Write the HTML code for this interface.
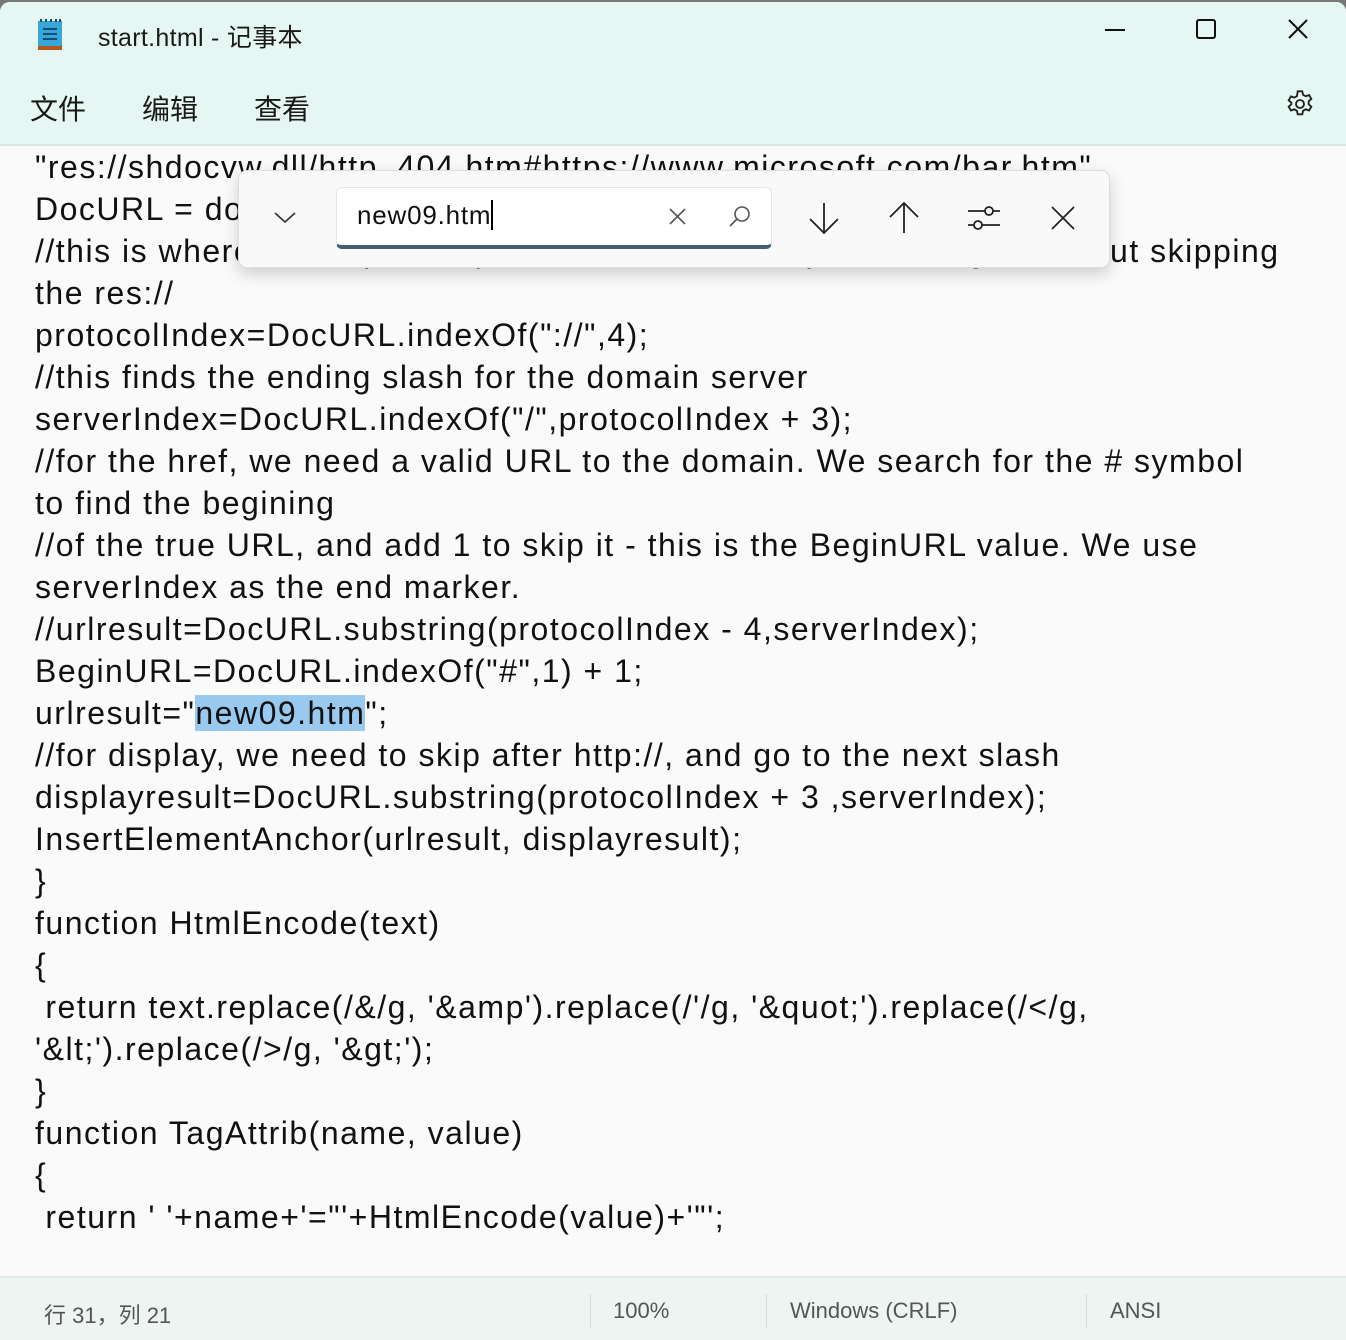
<!DOCTYPE html>
<html><head><meta charset="utf-8"><style>
body{margin:0;width:1346px;height:1340px;overflow:hidden;background:#777;font-family:"Liberation Sans","Noto Sans CJK SC",sans-serif;}
.win{position:absolute;left:0;top:2px;width:1346px;height:1338px;background:#fafafa;border-radius:10px 10px 0 0;overflow:hidden;}
.top{position:absolute;left:0;top:0;width:1346px;height:142px;background:#e6f7f3;border-bottom:2px solid #dbe6e3;}
.title{position:absolute;left:98px;top:16px;font-size:25px;letter-spacing:0.3px;color:#1a1a1a;}
.menu{position:absolute;top:86px;font-size:28px;color:#1a1a1a;}
.txt{position:absolute;left:35px;top:144px;font-size:32px;letter-spacing:1.5px;line-height:42px;color:#111;white-space:pre;}
.hl{background:#99c9ef;}
.find{position:absolute;left:238px;top:168px;width:870px;height:96px;background:#f9f9f9;border:1px solid #ddd;border-radius:9px;box-shadow:0 6px 16px rgba(0,0,0,.18);}
.inp{position:absolute;left:97px;top:16px;width:436px;height:62px;background:#fff;border:1px solid #e5e5e5;border-radius:6px;border-bottom:4px solid #42606f;box-sizing:border-box;}
.status{position:absolute;left:0;top:1274px;width:1346px;height:66px;background:#eef4f1;border-top:2px solid #e2e6e4;font-size:22px;color:#555;}
.status span{position:absolute;top:20px;}
.sep{position:absolute;top:16px;width:1px;height:34px;background:#d6dcd9;}
</style></head><body>
<div class="win">
<div class="top">
<svg style="position:absolute;left:36px;top:16px" width="28" height="34"><rect x="2" y="3" width="24" height="26" fill="#3aa6d8"/><rect x="2" y="28" width="24" height="4" fill="#b5581e"/><g stroke="#0b4f7a" stroke-width="2"><line x1="7" y1="11" x2="21" y2="11"/><line x1="7" y1="16" x2="21" y2="16"/><line x1="7" y1="21" x2="21" y2="21"/></g><g fill="#0b4f7a"><rect x="4" y="1" width="2" height="3"/><rect x="9" y="1" width="2" height="3"/><rect x="14" y="1" width="2" height="3"/><rect x="19" y="1" width="2" height="3"/><rect x="23" y="1" width="2" height="3"/></g></svg>
<div class="title">start.html - 记事本</div>
<div class="menu" style="left:30px">文件</div>
<div class="menu" style="left:142px">编辑</div>
<div class="menu" style="left:254px">查看</div>
<svg style="position:absolute;left:1100px;top:10px" width="240" height="40" fill="none" stroke="#111" stroke-width="2"><line x1="5" y1="18" x2="25" y2="18"/><rect x="97" y="8" width="18" height="18" rx="2"/><line x1="189" y1="8" x2="207" y2="26"/><line x1="207" y1="8" x2="189" y2="26"/></svg>
<svg style="position:absolute;left:1284px;top:86px" width="32" height="32" viewBox="0 0 24 24" fill="none" stroke="#222" stroke-width="1.4"><circle cx="12" cy="12" r="3"/><path d="M10.3 2.5h3.4l.6 2.6 2 1.1 2.5-.9 1.7 2.9-2 1.8v2.2l2 1.8-1.7 2.9-2.5-.9-2 1.1-.6 2.6h-3.4l-.6-2.6-2-1.1-2.5.9-1.7-2.9 2-1.8V11l-2-1.8 1.7-2.9 2.5.9 2-1.1z"/></svg>
</div>
<div class="txt">"res://shdocvw.dll/http_404.htm#https://www.microsoft.com/bar.htm"
DocURL = document.URL;
//this is where the http or https will be, as found by searching for :// but skipping
the res://
protocolIndex=DocURL.indexOf("://",4);
//this finds the ending slash for the domain server
serverIndex=DocURL.indexOf("/",protocolIndex + 3);
//for the href, we need a valid URL to the domain. We search for the # symbol
to find the begining
//of the true URL, and add 1 to skip it - this is the BeginURL value. We use
serverIndex as the end marker.
//urlresult=DocURL.substring(protocolIndex - 4,serverIndex);
BeginURL=DocURL.indexOf("#",1) + 1;
urlresult="<span class="hl">new09.htm</span>";
//for display, we need to skip after http://, and go to the next slash
displayresult=DocURL.substring(protocolIndex + 3 ,serverIndex);
InsertElementAnchor(urlresult, displayresult);
}
function HtmlEncode(text)
{
 return text.replace(/&amp;/g, '&amp;amp').replace(/'/g, '&amp;quot;').replace(/&lt;/g,
'&amp;lt;').replace(/&gt;/g, '&amp;gt;');
}
function TagAttrib(name, value)
{
 return ' '+name+'="'+HtmlEncode(value)+'"';</div>
<div class="find">
<svg style="position:absolute;left:34px;top:38px" width="24" height="16" fill="none" stroke="#333" stroke-width="1.6"><polyline points="2,4 12,13 22,4"/></svg>
<div class="inp"><div style="position:absolute;left:20px;top:12px;font-size:26px;letter-spacing:0.8px;color:#111">new09.htm<span style="display:inline-block;width:2px;height:30px;background:#000;vertical-align:-6px"></span></div>
<svg style="position:absolute;left:330px;top:18px" width="22" height="22" stroke="#555" stroke-width="1.6"><line x1="3" y1="3" x2="18" y2="18"/><line x1="18" y1="3" x2="3" y2="18"/></svg>
<svg style="position:absolute;left:390px;top:16px" width="26" height="26" fill="none" stroke="#555" stroke-width="1.6"><circle cx="15" cy="10" r="7"/><line x1="10" y1="15" x2="3" y2="22"/></svg></div>
<svg style="position:absolute;left:565px;top:28px" width="300" height="40" fill="none" stroke="#222" stroke-width="1.8"><line x1="20" y1="4" x2="20" y2="34"/><polyline points="6,20 20,34 34,20"/><line x1="100" y1="4" x2="100" y2="34"/><polyline points="86,18 100,4 114,18"/><line x1="164" y1="12" x2="196" y2="12"/><line x1="164" y1="26" x2="196" y2="26"/><circle cx="185" cy="12" r="4" fill="#f9f9f9"/><circle cx="174" cy="26" r="4" fill="#f9f9f9"/><line x1="248" y1="8" x2="270" y2="30"/><line x1="270" y1="8" x2="248" y2="30"/></svg>
</div>
<div class="status">
<span style="left:44px">行 31，列 21</span>
<div class="sep" style="left:590px"></div><span style="left:613px">100%</span>
<div class="sep" style="left:766px"></div><span style="left:790px">Windows (CRLF)</span>
<div class="sep" style="left:1086px"></div><span style="left:1110px">ANSI</span>
</div>
</div>
</body></html>
